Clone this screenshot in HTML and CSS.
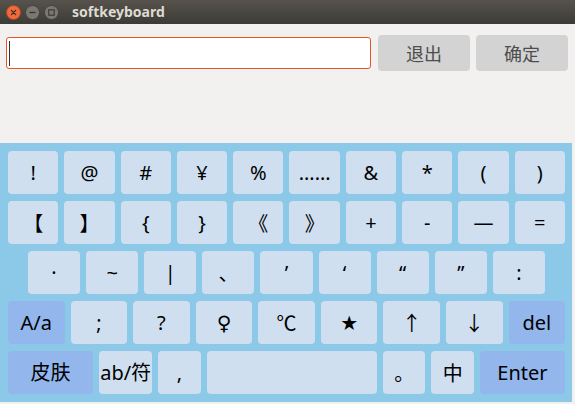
FILE: index.html
```html
<!DOCTYPE html>
<html lang="zh">
<head>
<meta charset="utf-8">
<title>softkeyboard</title>
<link rel="stylesheet" href="styles.css">
</head>
<body>
<div class="window">
  <div class="titlebar">
    <div class="controls">
      <span class="wbtn close">
        <svg width="15" height="15" viewBox="0 0 15 15"><circle cx="7.5" cy="7.5" r="7" fill="#ef6a3c" stroke="#b8421c" stroke-width="0.8"/><path d="M5.3 5.3 L9.7 9.7 M9.7 5.3 L5.3 9.7" stroke="#3a2a22" stroke-width="1.2" stroke-linecap="round"/></svg>
      </span>
      <span class="wbtn min">
        <svg width="15" height="15" viewBox="0 0 15 15"><circle cx="7.5" cy="7.5" r="7" fill="#7b7872" stroke="#3e3c38" stroke-width="0.8"/><path d="M4.5 7.5 H10.5" stroke="#36342f" stroke-width="1.3"/></svg>
      </span>
      <span class="wbtn max">
        <svg width="15" height="15" viewBox="0 0 15 15"><circle cx="7.5" cy="7.5" r="7" fill="#7b7872" stroke="#3e3c38" stroke-width="0.8"/><rect x="4.8" y="4.8" width="5.4" height="5.4" fill="none" stroke="#36342f" stroke-width="1.1"/></svg>
      </span>
    </div>
    <div class="title">softkeyboard</div>
  </div>
  <div class="top">
    <div class="input-row">
      <div class="input"><span class="caret"></span></div>
      <div class="btn">退出</div>
      <div class="btn">确定</div>
    </div>
  </div>
  <div class="keyboard">
    <div class="row">
      <div class="key">!</div><div class="key">@</div><div class="key">#</div><div class="key">¥</div><div class="key">%</div><div class="key">……</div><div class="key">&amp;</div><div class="key">*</div><div class="key">(</div><div class="key">)</div>
    </div>
    <div class="row">
      <div class="key cjk">【</div><div class="key cjk">】</div><div class="key">{</div><div class="key">}</div><div class="key cjk">《</div><div class="key cjk">》</div><div class="key">+</div><div class="key">-</div><div class="key">—</div><div class="key">=</div>
    </div>
    <div class="row inset">
      <div class="key">·</div><div class="key small">~</div><div class="key">|</div><div class="key cjk">、</div><div class="key">’</div><div class="key">‘</div><div class="key">“</div><div class="key">”</div><div class="key">:</div>
    </div>
    <div class="row">
      <div class="key dark">A/a</div><div class="key">;</div><div class="key">?</div><div class="key sym">♀</div><div class="key cjk">℃</div><div class="key sym">★</div><div class="key cjk">↑</div><div class="key cjk">↓</div><div class="key dark">del</div>
    </div>
    <div class="row">
      <div class="key dark w2">皮肤</div><div class="key w125">ab/符</div><div class="key">,</div><div class="key w4"></div><div class="key cjk">。</div><div class="key cjk">中</div><div class="key dark w2">Enter</div>
    </div>
  </div>
</div>
</body>
</html>
```
FILE: styles.css
```css
html, body {
  margin: 0;
  padding: 0;
}
body {
  width: 575px;
  height: 404px;
  background: #f2f1f0;
  overflow: hidden;
  font-family: "Noto Sans", "Noto Sans CJK SC", sans-serif;
}
.window {
  width: 575px;
  height: 404px;
}
.titlebar {
  height: 24px;
  background: linear-gradient(#57534c, #3c3b37);
  display: flex;
  align-items: center;
  padding-left: 6px;
  box-sizing: border-box;
}
.controls {
  display: flex;
  align-items: center;
}
.wbtn {
  display: block;
  width: 15px;
  height: 15px;
}
.wbtn svg {
  display: block;
}
.wbtn.min {
  margin-left: 4px;
}
.wbtn.max {
  margin-left: 4px;
}
.title {
  margin-left: 13px;
  color: #dfdbd2;
  font-family: "Noto Sans", sans-serif;
  font-weight: bold;
  font-size: 14px;
  line-height: 24px;
}
.top {
  height: 119px;
  box-sizing: border-box;
  padding: 11px 7px 0 6px;
}
.input-row {
  display: flex;
  align-items: center;
  height: 36px;
}
.input {
  flex: 1;
  height: 32px;
  box-sizing: border-box;
  background: #ffffff;
  border: 1px solid #e2582a;
  border-radius: 3px;
  margin-right: 7px;
  position: relative;
}
.caret {
  position: absolute;
  left: 2px;
  top: 3px;
  width: 1px;
  height: 25px;
  background: #333333;
}
.btn {
  width: 92px;
  height: 36px;
  background: #d3d3d3;
  border-radius: 4px;
  color: #4d4d4d;
  font-family: "Noto Sans CJK SC", sans-serif;
  font-size: 18px;
  display: flex;
  align-items: center;
  justify-content: center;
}
.btn + .btn {
  margin-left: 6px;
}
.keyboard {
  width: 572px;
  height: 259px;
  box-sizing: border-box;
  background: #8cc8e7;
  padding: 8px 7px 8px 8px;
  display: flex;
  flex-direction: column;
  gap: 7px;
}
.row {
  display: flex;
  gap: 6px;
  height: 43px;
}
.row.inset {
  padding: 0 20px;
}
.key {
  flex: 1 1 0;
  min-width: 0;
  background: #cfdff0;
  border-radius: 4px;
  display: flex;
  align-items: center;
  justify-content: center;
  font-size: 20px;
  color: #000000;
  white-space: nowrap;
  line-height: 1;
}
.key.cjk {
  font-family: "Noto Sans CJK SC", sans-serif;
}
.key.sym {
  font-family: "DejaVu Sans", "Noto Sans CJK SC", sans-serif;
}
.key.dark {
  background: #93b6ec;
}
.key.w2 {
  flex-grow: 2;
}
.key.w125 {
  flex-grow: 1.25;
}
.key.w4 {
  flex-grow: 4;
}
```
